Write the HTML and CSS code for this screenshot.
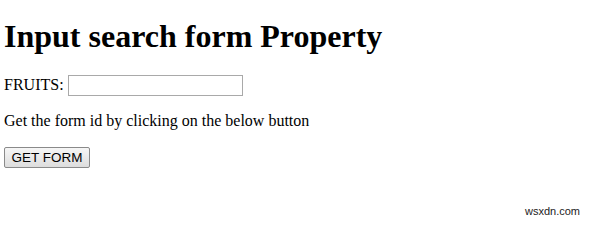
FILE: index.html
```html
<!DOCTYPE html>
<html>
<head>
    <title>Input search form Property</title>
    <link rel="stylesheet" href="styles.css">
</head>
<body>
    <h1>Input search form Property</h1>

    <form id="fruitForm">
        FRUITS: <input type="search" id="fruits" class="search-box">
    </form>

    <p>Get the form id by clicking on the below button</p>

    <button class="get-btn" type="button">GET FORM</button>

    <p id="result"></p>

    <div class="watermark">wsxdn.com</div>
</body>
</html>
```

FILE: styles.css
```css
body {
    font-family: "Liberation Serif", "Times New Roman", serif;
    font-size: 16px;
    margin: 4px;
    color: #000;
    background: #fff;
}
h1 {
    font-size: 32px;
    margin: 14px 0 20px 0;
}
form {
    margin: 0 0 4px 0;
}
.search-box {
    box-sizing: border-box;
    width: 175px;
    height: 21px;
    padding: 1px 2px;
    border: 1px solid #a9a9a9;
    margin: 0;
    vertical-align: baseline;
    font-size: 13px;
}
p {
    margin: 16px 0 17px 0;
}
.get-btn {
    font-family: "Liberation Sans", Arial, sans-serif;
    font-size: 13.5px;
    width: 86px;
    height: 21px;
    padding: 0;
    border: 1px solid #8a8a8a;
    border-radius: 2px;
    background: linear-gradient(#f6f6f6, #dddddd);
    color: #000;
}
.watermark {
    position: absolute;
    right: 19px;
    bottom: 16px;
    font-family: "Liberation Sans", Arial, sans-serif;
    font-size: 11px;
    color: #222;
}
```
